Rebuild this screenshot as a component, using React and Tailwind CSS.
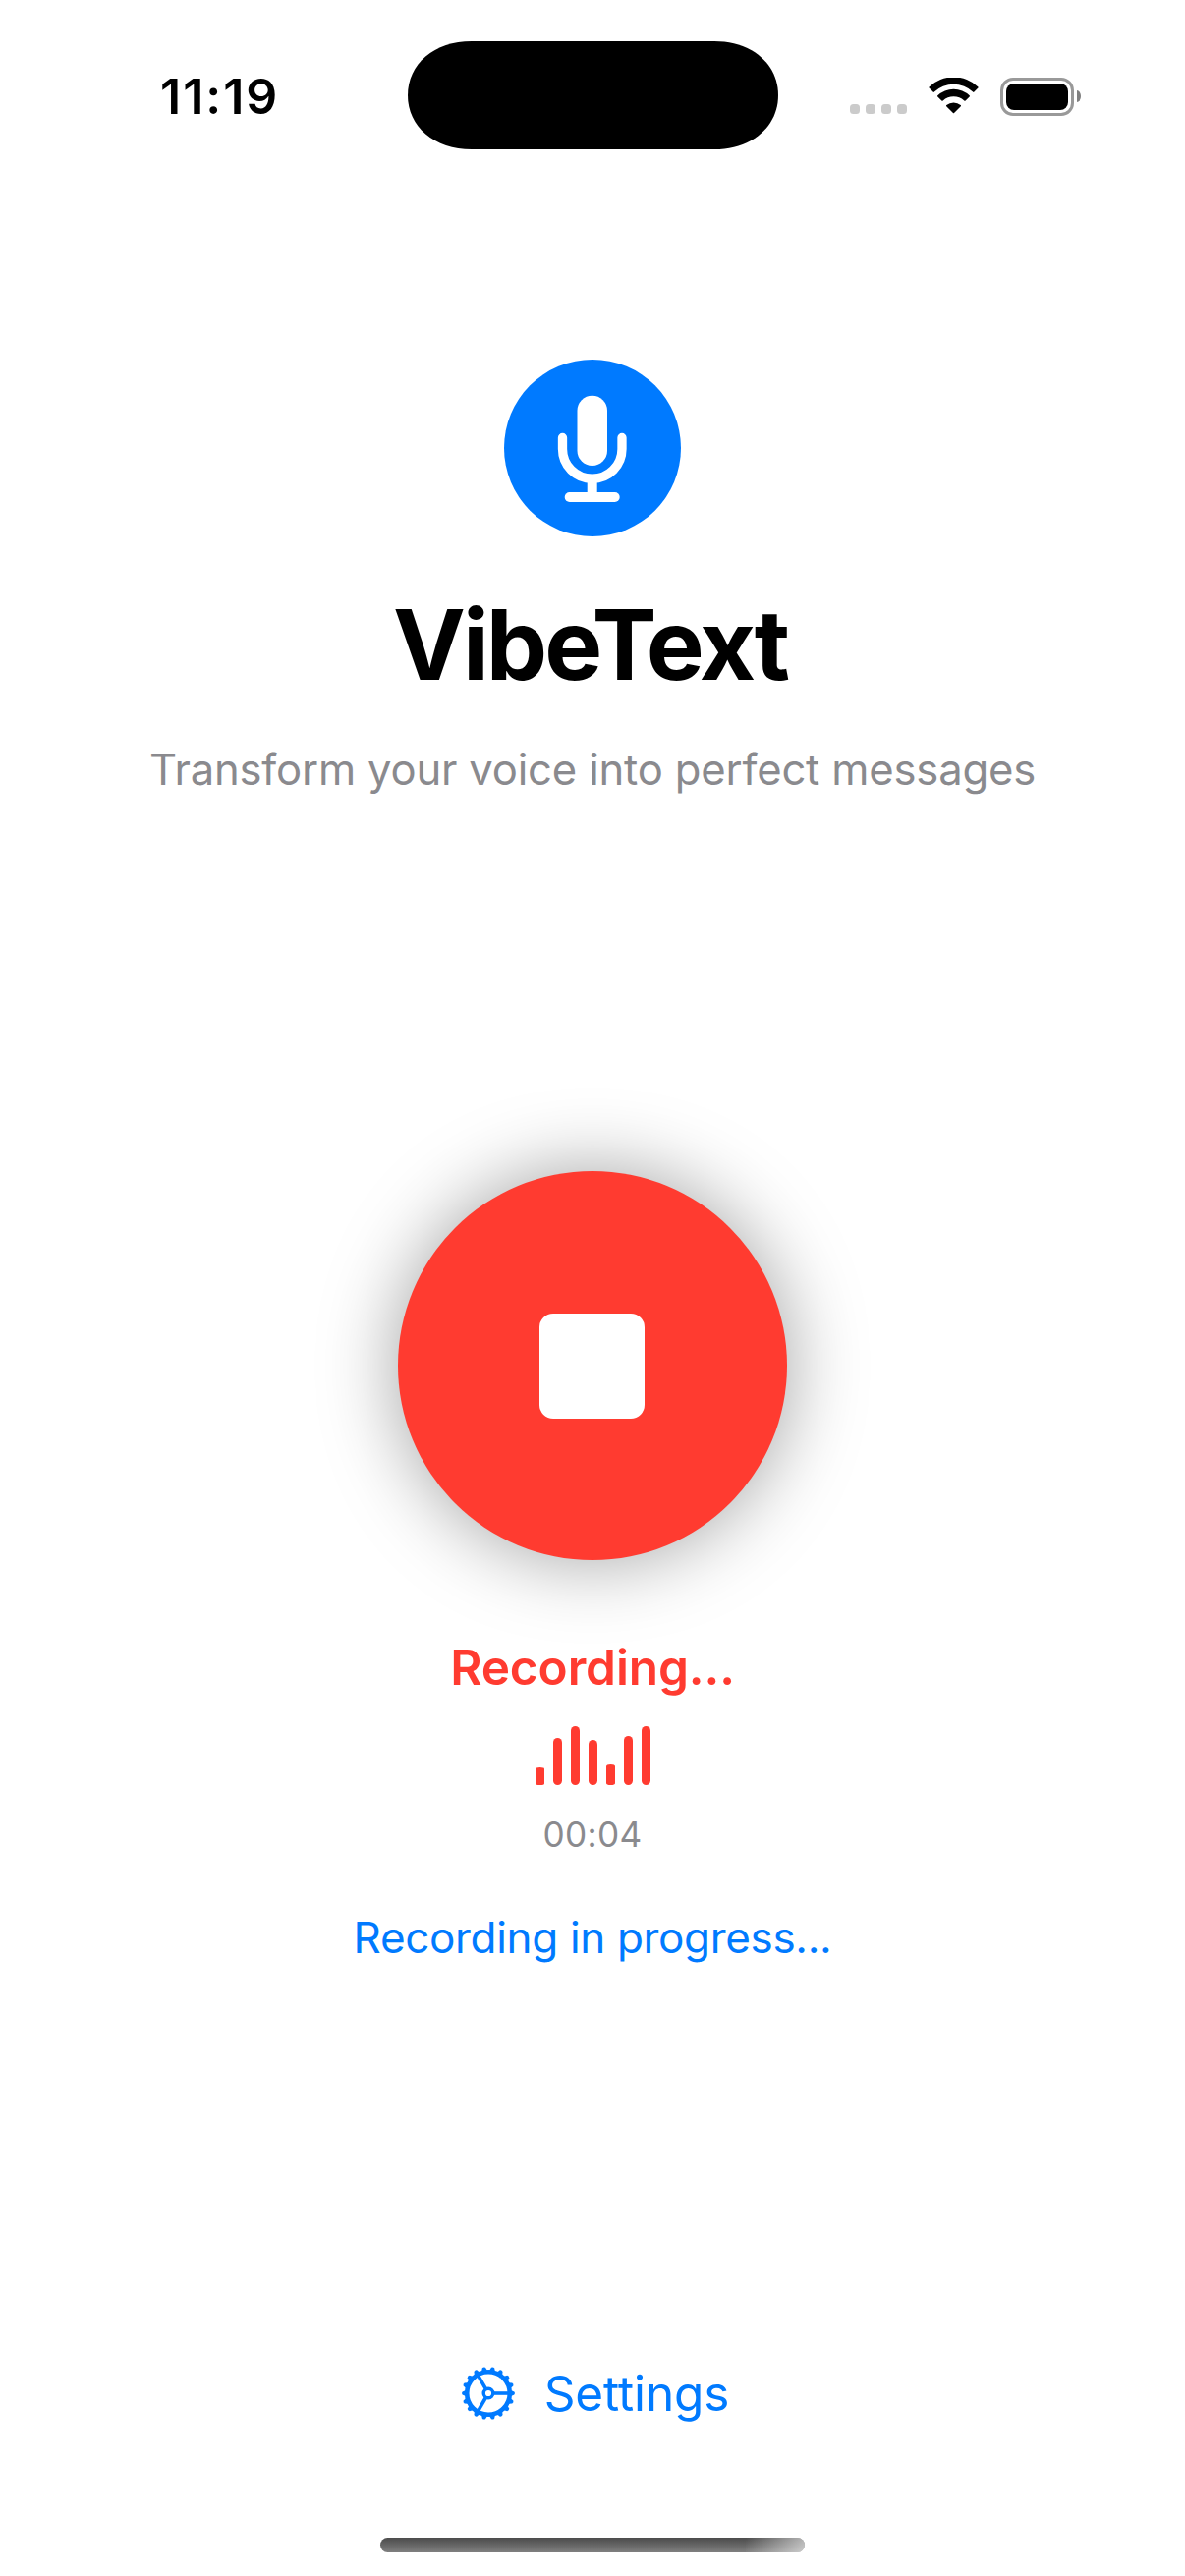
const BARS = [
  "h-[18px] rounded-[4.5px/1.5px]",
  "h-[48px] rounded-[4.5px]",
  "h-[60px] rounded-[4.5px]",
  "h-[46px] rounded-[4.5px]",
  "h-[21px] rounded-[4.5px/2px]",
  "h-[50px] rounded-[4.5px]",
  "h-[60px] rounded-[4.5px]",
];

function Gear() {
  return (
    <svg className="h-[56px] w-[56px]" viewBox="-28 -28 56 56" fill="none" stroke="currentColor">
      <circle r="21.8" strokeWidth="4.6" />
      {Array.from({ length: 18 }, (_, i) => (
        <path key={i} transform={`rotate(${i * 20 })`} d="M22.5 -3.2L26.4 -1.6Q27.6 0 26.4 1.6L22.5 3.2Z" fill="currentColor" stroke="none" />
      ))}
      <circle r="4.8" strokeWidth="3.4" />
      {[0, 120, 240].map((a) => (
        <path key={a} transform={`rotate(${a})`} d="M5.5 0H21" strokeWidth="3.6" />
      ))}
    </svg>
  );
}

function StatusBar() {
  return (
    <header className="grid h-[196px] w-full grid-cols-[415px_377px_1fr] items-center">
      <div className="pl-[163px] text-[50px] leading-[60px] font-semibold tracking-[2px]">11:19</div>
      <svg className="mb-[2px] h-[110px] w-[377px]" viewBox="0 0 377 110">
        <path d="M65 0H312C350 0 377 23 377 55S350 110 312 110H65C27 110 0 87 0 55S27 0 65 0Z" />
      </svg>
      <div className="flex items-center pl-[73px]">
        <div className="flex gap-[6px] pt-[26px]">
          {[0, 1, 2, 3].map((i) => (
            <span key={i} className="size-[10px] rounded-[3.5px] bg-[#cbcbcb]" />
          ))}
        </div>
        <svg className="ml-[22px] h-[38px] w-[51px]" viewBox="0 0 51 38">
          <path d="M.6 10.6Q0 10 .6 9.4A36 36 0 0 1 50.4 9.4Q51 10 50.4 10.6L46.4 14.6Q45.8 15.2 45.1 14.6A28.5 28.5 0 0 0 5.9 14.6Q5.2 15.2 4.6 14.6Z" />
          <path d="M9.3 19.4Q8.7 18.8 9.3 18.2A23.5 23.5 0 0 1 41.7 18.2Q42.3 18.8 41.7 19.4L37.6 23.5Q37 24.1 36.3 23.5A16 16 0 0 0 14.7 23.5Q14 24.1 13.4 23.5Z" />
          <path d="M18.2 28.3Q17.6 27.7 18.3 27.1A11 11 0 0 1 32.7 27.1Q33.4 27.7 32.8 28.3L26 35.1Q25.5 35.6 25 35.1Z" transform="translate(0 1)" />
        </svg>
        <div className="ml-[22px] h-[39px] w-[75px] rounded-[13px] border-3 border-[#999] p-[3px]">
          <div className="h-full w-full rounded-[8px] bg-black" />
        </div>
        <div className="ml-[3px] h-[12px] w-[4px] rounded-[0_4px_4px_0/0_6px_6px_0] bg-[#808080]" />
      </div>
    </header>
  );
}

export default function App() {
  return (
    <div className="flex h-[2622px] w-[1206px] flex-col items-center bg-white font-['Inter',sans-serif] text-black">
      <StatusBar />

      <div className="mt-[170px] flex size-[180px] items-center justify-center rounded-full bg-[#007aff]">
        <svg className="h-[110px] w-[72px]" viewBox="567 401 72 110" fill="none" stroke="white">
          <rect x="587.5" y="402.7" width="30.5" height="71.3" rx="15.2" fill="white" stroke="none" />
          <path d="M572.5 445.5V457A30.2 30.2 0 0 0 633 457V445.5" strokeWidth="9.3" strokeLinecap="round" />
          <path d="M602.7 488V505" strokeWidth="10" />
          <path d="M579.7 506H625.7" strokeWidth="10" strokeLinecap="round" />
        </svg>
      </div>
      <h1 className="mt-[50px] pr-[5px] text-[99px] leading-[120px] font-bold tracking-[-3px] whitespace-nowrap">VibeText</h1>
      <p className="mt-[38px] text-[43.6px] leading-[60px] tracking-[-0.18px] whitespace-nowrap text-[#8a8a8e]">
        Transform your voice into perfect messages
      </p>

      <button className="mt-[378px] flex size-[396px] shrink-0 items-center justify-center rounded-full bg-[#ff3b30] shadow-[0_0_80px_rgba(0,0,0,0.37)]">
        <span className="mr-px size-[107px] rounded-[14px] bg-white" />
      </button>
      <p className="mt-[79px] text-[49.5px] leading-[60px] font-semibold tracking-[-0.1px] whitespace-nowrap text-[#ff3b30]">
        Recording...
      </p>
      <div className="mt-[30px] flex h-[60px] items-end gap-[9px] pl-px">
        {BARS.map((bar, i) => (
          <span key={i} className={`w-[9px] bg-[#ff3b30] ${bar}`} />
        ))}
      </div>
      <p className="mt-[28px] text-[35.2px] leading-[44px] tracking-[0.3px] text-[#8a8a8e]">00:04</p>
      <p className="mt-[53px] text-[44px] leading-[60px] tracking-[-0.33px] whitespace-nowrap text-[#007aff]">
        Recording in progress...
      </p>

      <button className="mt-[404px] flex items-center gap-[29px] pl-[5px] text-[49.5px] leading-[60px] tracking-[-0.1px] text-[#007aff]">
        <Gear />
        <span>Settings</span>
      </button>
      <div className="mt-[117px] h-[15px] w-[432px] overflow-hidden rounded-full bg-linear-to-b from-[#4c4c4c] to-[#808080]">
        <div className="ml-auto h-full w-[60px] bg-[linear-gradient(100deg,transparent,rgba(255,255,255,0.6))]" />
      </div>
    </div>
  );
}
